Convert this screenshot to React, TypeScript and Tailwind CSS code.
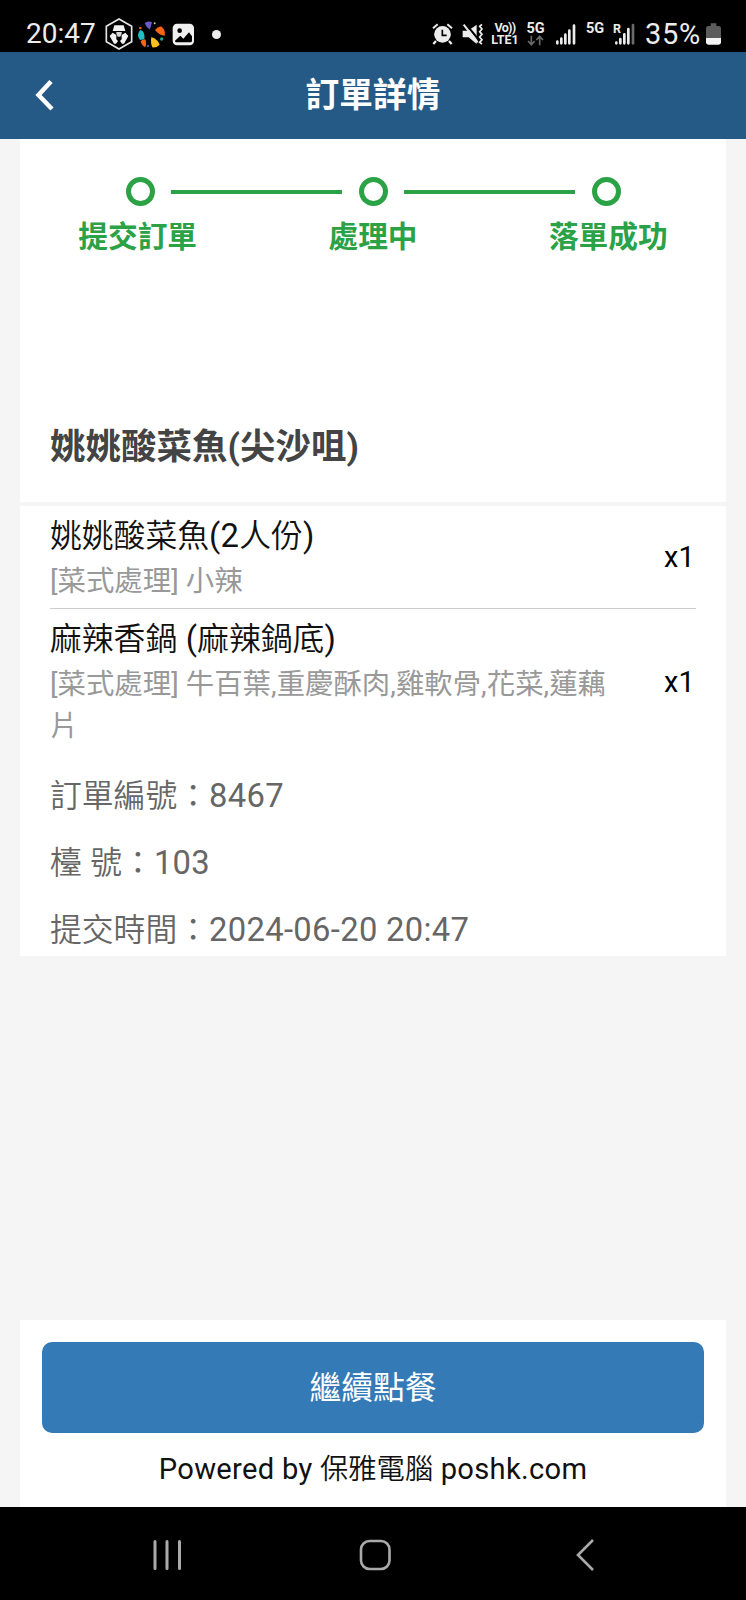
import React from 'react';

const steps = ['提交訂單', '處理中', '落單成功'];

const items = [
  { name: '姚姚酸菜魚(2人份)', note: '[菜式處理] 小辣', qty: 1 },
  { name: '麻辣香鍋 (麻辣鍋底)', note: '[菜式處理] 牛百葉,重慶酥肉,雞軟骨,花菜,蓮藕片', qty: 1 },
];

const details = ['訂單編號：8467', '檯 號：103', '提交時間：2024-06-20 20:47'];

// Chinese is set a little lighter than the latin letters and digits beside it
const Mixed: React.FC<{ text: string }> = ({ text }) => (
  <span className="font-[350]">
    {text.split(/([\x20-\x7e]+)/).map((part, i) =>
      i % 2 ? (
        <span key={i} className="text-[1.03em] leading-none font-normal tracking-[0.01em]">
          {part}
        </span>
      ) : (
        part
      )
    )}
  </span>
);

const StatusBar: React.FC = () => (
  <div className="flex h-[52px] shrink-0 items-center justify-between bg-black pt-4 pl-[26px] pr-[25px] text-[#ececec]">
    <div className="flex items-center">
      <span className="w-[79px] text-[28px] leading-[36px]">20:47</span>
      {/* hexagon app badge */}
      <svg className="h-8 w-7" viewBox="0 0 84 96" fill="none">
        <path d="M42 3 80 25v46L42 93 4 71V25Z" stroke="#e4e4e4" strokeWidth="5" />
        <path d="M28 22h28l5 17H23Z" fill="#f2f2f2" />
        <path d="M34 42h16v5l-4 9h-8l-4-9Z" fill="#d8d8d8" />
        <path d="m14 54 9-10 11 7v13l5 5-6 8h-6Z" fill="#f2f2f2" />
        <path d="m70 54-9-10-11 7v13l-5 5 6 8h6Z" fill="#f2f2f2" />
      </svg>
      {/* colour wheel */}
      <svg className="ml-1 h-7 w-7" viewBox="0 0 84 84">
        <path d="M23 9q10-8 22-2l-6 21q-10-4-16-19Z" fill="#6a5acd" />
        <path d="M54 30Q64 17 74 20q12 10 9 27-16 0-29-17Z" fill="#fa6414" />
        <path d="M10 30q15 4 12 28l-13 2Q-4 44 10 30Z" fill="#1fbfc4" />
        <path d="M43 51q22 9 25 23-10 10-22 8-6-13-3-31Z" fill="#fcc21c" />
        <path d="M11 63q10-8 15-4 3 12-1 23-12-6-14-19Z" fill="#fa6414" />
        <circle cx="53" cy="10" r="3" fill="#b8c0c4" />
        <circle cx="10" cy="24" r="4" fill="#e35a18" />
        <circle cx="33" cy="78" r="3" fill="#7a5ccd" />
        <circle cx="74" cy="57" r="5" fill="#2f9d8f" />
      </svg>
      {/* gallery */}
      <svg className="ml-[7px] h-[23px] w-[23px]" viewBox="0 0 69 69">
        <rect x="2" y="2" width="64" height="65" rx="13" fill="#f0f0f0" />
        <circle cx="23" cy="23" r="7" fill="#000" />
        <path d="M9 53 25 38l9 9 17-19 9 12v13q0 5-5 5H13q-4 0-4-5Z" fill="#000" />
      </svg>
      <span className="ml-[17px] h-[9px] w-[9px] rounded-full bg-[#ececec]" />
    </div>

    <div className="flex items-center">
      {/* alarm */}
      <svg className="h-[22px] w-[21px]" viewBox="0 0 63 66" fill="none">
        <path d="M3 16 17 4M60 16 46 4" stroke="#ececec" strokeWidth="6" />
        <circle cx="31.500" cy="34" r="25" fill="#ececec" />
        <path d="m12 54-8 9M51 54l8 9" stroke="#ececec" strokeWidth="7" />
        <path d="M31 20v17h13" stroke="#000" strokeWidth="5" />
      </svg>
      {/* muted speaker with vibration lines */}
      <svg className="ml-[9px] h-[22px] w-[22px]" viewBox="0 0 66 66" fill="none">
        <path d="M2 23h16L44 5v58L20 43H2Z" fill="#ececec" />
        <path d="m9 0 44 54" stroke="#000" strokeWidth="6" />
        <path d="m5 5 42 53" stroke="#ececec" strokeWidth="6" />
        <path d="m60 4-7 6 7 8-7 8 7 8-7 8 7 8-7 8 7 5" stroke="#ececec" strokeWidth="5" />
      </svg>
      <div className="ml-[7px] w-[28px] text-center text-[12.500px] leading-[12px] font-bold">
        <div className="tracking-[-0.700px]">Vo))</div>
        <div>LTE1</div>
      </div>
      <div className="ml-[7px] flex h-[24px] w-[19px] flex-col items-center">
        <span className="text-[14.500px] leading-[13px] font-bold">5G</span>
        <svg className="h-[11px] w-[17px]" viewBox="0 0 51 33" fill="none" stroke="#666" strokeWidth="5">
          <path d="M13 2v26M3 18l10 11 10-11M38 31V5M28 15 38 4l10 11" />
        </svg>
      </div>
      <svg className="ml-[11px] h-[21px] w-[20px]" viewBox="0 0 60 63" stroke="#ececec" strokeWidth="8" strokeLinecap="round">
        <path d="M4 58v-5M16 58V44M28 58V32M40 58V20M54 58V5" />
      </svg>
      <span className="ml-[10px] h-[24px] w-[19px] text-[14.500px] leading-[13px] font-bold">5G</span>
      <div className="relative ml-[9px] h-[22px] w-[21px]">
        <svg className="h-[22px] w-[21px]" viewBox="0 0 63 66" strokeWidth="8" strokeLinecap="round">
          <path d="M7 61v-2M19 61V48M31 61V34M43 61V18" stroke="#ececec" />
          <path d="M57 61V6" stroke="#6a6a6a" />
        </svg>
        <span className="absolute top-0 left-[-1px] text-[12.500px] leading-[11px] font-bold">R</span>
      </div>
      <span className="ml-[10px] w-[58px] text-[29px] leading-[36px] tracking-[0.700px]">35%</span>
      {/* battery */}
      <svg className="ml-[3px] h-[22px] w-[15px]" viewBox="0 0 45 66">
        <path d="M14 1h17v8h7q7 0 7 7v30H0V16q0-7 7-7h7Z" fill="#5c5c5c" />
        <path d="M0 45h45v13q0 7-7 7H7q-7 0-7-7Z" fill="#f4f4f4" />
      </svg>
    </div>
  </div>
);

const App: React.FC = () => {
  return (
    <div className="flex h-[1600px] w-[746px] flex-col overflow-hidden bg-[#f5f5f5] font-[Roboto,'Noto_Sans_CJK_TC',sans-serif]">
      <StatusBar />

      <header className="grid h-[87px] shrink-0 grid-cols-[1fr_auto_1fr] items-center bg-[#255a87] text-white">
        <svg className="ml-[34px] h-[32px] w-[21px]" viewBox="0 0 21 32" fill="none" stroke="#fff" strokeWidth="4.5">
          <path d="M17 1.500 4.500 15 18 29" />
        </svg>
        <h1 className="text-[33.700px] leading-[48px] font-bold">訂單詳情</h1>
      </header>

      <main className="mx-5 h-[817px] shrink-0 bg-white">
        <div className="h-[363px]">
          <div className="flex items-center gap-[16.500px] px-[105.500px] pt-[38px]">
            {steps.map((step, i) => (
              <React.Fragment key={step}>
                {i > 0 && <div className="h-1 flex-1 bg-[#2ba245]" />}
                <div className="h-[29px] w-[29px] rounded-full border-[5px] border-[#2ba245]" />
              </React.Fragment>
            ))}
          </div>
          <div className="mt-[10px] grid grid-cols-3 text-center text-[29.700px] leading-[42px] font-bold text-[#2ba245]">
            {steps.map((step) => (
              <span key={step}>{step}</span>
            ))}
          </div>
          <h2 className="mt-[163px] pl-[30px] text-[35.500px] leading-[52px] font-bold text-[#444]">姚姚酸菜魚(尖沙咀)</h2>
        </div>

        <div className="border-t-4 border-[#f5f5f5] px-[30px]">
          {items.map((item) => (
            <div key={item.name} className="flex items-center justify-between border-b border-[#ccc] pt-[7px] pb-[5px] last:border-b-0">
              <div className="w-[565px]">
                <div className="text-[31.800px] leading-[46px] text-[#111]">
                  <Mixed text={item.name} />
                </div>
                <div className="mt-[1.500px] text-[28.400px] leading-[42.500px] tracking-[0.020px] text-[#999]">{item.note}</div>
              </div>
              <span className="pr-px text-[28.800px] tracking-[0.300px] text-black">x{item.qty}</span>
            </div>
          ))}
        </div>

        <div className="mt-[16.500px] flex flex-col gap-[14px] pl-[30px] text-[31.800px] leading-[53px] text-[#666]">
          {details.map((line) => (
            <div key={line}>
              <Mixed text={line} />
            </div>
          ))}
        </div>
      </main>

      <footer className="mx-5 mt-auto h-[187px] shrink-0 bg-white px-[22px] pt-[22px] text-center">
        <button className="block h-[91px] w-full rounded-[10px] bg-[#337ab7] pt-[3px] text-[31.800px] text-white">繼續點餐</button>
        <div className="mt-[16px] text-[28.300px] leading-[42px] text-[#111]">
          <Mixed text="Powered by 保雅電腦 poshk.com" />
        </div>
      </footer>

      <nav className="flex h-[93px] shrink-0 items-center bg-black pt-[3px] pl-[152px]">
        <svg className="h-[32px] w-[30px]" viewBox="0 0 30 32" stroke="#aaa" strokeWidth="3" strokeLinecap="round">
          <path d="M3 2.500v27M15 2.500v27M27.500 2.500v27" />
        </svg>
        <svg className="ml-[177px] h-[32px] w-[33px]" viewBox="0 0 33 32" fill="none" stroke="#aaa" strokeWidth="2.6">
          <rect x="2" y="2" width="28.500" height="28" rx="8.500" />
        </svg>
        <svg className="ml-[183px] h-[32px] w-[20px]" viewBox="0 0 20 32" fill="none" stroke="#aaa" strokeWidth="2.6">
          <path d="M18 1 3 16l15 15" />
        </svg>
      </nav>
    </div>
  );
};

export default App;
